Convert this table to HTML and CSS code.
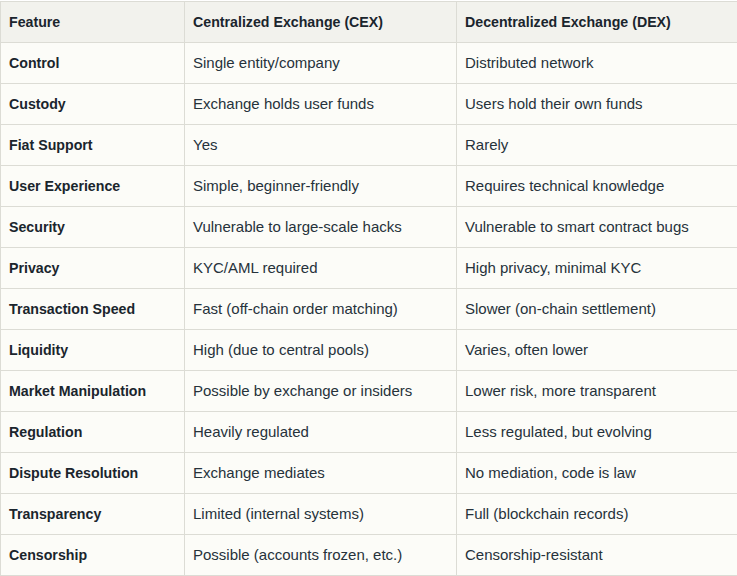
FILE: index.html
```html
<!DOCTYPE html>
<html>
<head>
<meta charset="utf-8">
<link rel="stylesheet" href="styles.css">
</head>
<body>
<table class="cmp">
  <thead>
    <tr><th class="c1">Feature</th><th class="c2">Centralized Exchange (CEX)</th><th class="c3">Decentralized Exchange (DEX)</th></tr>
  </thead>
  <tbody>
    <tr><td class="lbl">Control</td><td>Single entity/company</td><td>Distributed network</td></tr>
    <tr><td class="lbl">Custody</td><td>Exchange holds user funds</td><td>Users hold their own funds</td></tr>
    <tr><td class="lbl">Fiat Support</td><td>Yes</td><td>Rarely</td></tr>
    <tr><td class="lbl">User Experience</td><td>Simple, beginner-friendly</td><td>Requires technical knowledge</td></tr>
    <tr><td class="lbl">Security</td><td>Vulnerable to large-scale hacks</td><td>Vulnerable to smart contract bugs</td></tr>
    <tr><td class="lbl">Privacy</td><td>KYC/AML required</td><td>High privacy, minimal KYC</td></tr>
    <tr><td class="lbl">Transaction Speed</td><td>Fast (off-chain order matching)</td><td>Slower (on-chain settlement)</td></tr>
    <tr><td class="lbl">Liquidity</td><td>High (due to central pools)</td><td>Varies, often lower</td></tr>
    <tr><td class="lbl">Market Manipulation</td><td>Possible by exchange or insiders</td><td>Lower risk, more transparent</td></tr>
    <tr><td class="lbl">Regulation</td><td>Heavily regulated</td><td>Less regulated, but evolving</td></tr>
    <tr><td class="lbl">Dispute Resolution</td><td>Exchange mediates</td><td>No mediation, code is law</td></tr>
    <tr><td class="lbl">Transparency</td><td>Limited (internal systems)</td><td>Full (blockchain records)</td></tr>
    <tr><td class="lbl">Censorship</td><td>Possible (accounts frozen, etc.)</td><td>Censorship-resistant</td></tr>
  </tbody>
</table>
</body>
</html>
```
FILE: styles.css
```css
html, body {
  margin: 0;
  padding: 0;
  background: #ffffff;
}
body {
  padding-top: 1px;
  font-family: "Liberation Sans", Arial, sans-serif;
  font-size: 15px;
  color: #26323b;
}
.cmp {
  border-collapse: collapse;
  width: 741px;
  table-layout: fixed;
  background: #fcfcf8;
}
.cmp th, .cmp td {
  border: 1px solid #dcdcd5;
  height: 41px;
  padding: 0 8px 1px;
  line-height: 18px;
  text-align: left;
  vertical-align: middle;
  white-space: nowrap;
  box-sizing: border-box;
}
.cmp th {
  background: #f2f2ed;
  font-weight: bold;
  font-size: 14.2px;
  color: #1a252d;
}
.cmp .lbl {
  font-weight: bold;
  font-size: 14.2px;
  color: #1a252d;
}
.c1 { width: 184px; }
.c2 { width: 272px; }
.c3 { width: 285px; }
```
